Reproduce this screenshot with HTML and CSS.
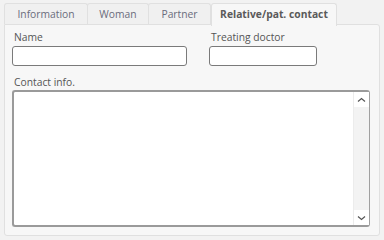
FILE: index.html
```html
<!DOCTYPE html>
<html>
<head>
<meta charset="utf-8">
<link rel="stylesheet" href="styles.css">
</head>
<body>
<div class="tabs">
  <div class="tab t1">Information</div>
  <div class="tab t2">Woman</div>
  <div class="tab t3">Partner</div>
  <div class="tab active">Relative/pat. contact</div>
</div>
<div class="panel">
  <div class="row">
    <div class="field f-name">
      <label class="lbl">Name</label>
      <div class="input"></div>
    </div>
    <div class="field f-doc">
      <label class="lbl">Treating doctor</label>
      <div class="input"></div>
    </div>
  </div>
  <div class="field f-contact">
    <label class="lbl">Contact info.</label>
    <div class="memo">
      <div class="memo-text"></div>
      <div class="scroll">
        <div class="sbtn"><svg width="9" height="6" viewBox="0 0 9 6"><path d="M1 4.5 L4.5 1.5 L8 4.5" fill="none" stroke="#555" stroke-width="1.2"/></svg></div>
        <div class="strack"></div>
        <div class="sbtn"><svg width="9" height="6" viewBox="0 0 9 6"><path d="M1 1.5 L4.5 4.5 L8 1.5" fill="none" stroke="#555" stroke-width="1.2"/></svg></div>
      </div>
    </div>
  </div>
</div>
</body>
</html>
```
FILE: styles.css
```css
* { box-sizing: border-box; }
body {
  margin: 0;
  width: 384px;
  height: 240px;
  background: #f2f2f2;
  font-family: "Open Sans", "Noto Sans", sans-serif;
  font-size: 10.3px;
  color: #555;
  overflow: hidden;
}
.tabs {
  display: flex;
  align-items: flex-end;
  padding-left: 4px;
  height: 25px;
  padding-top: 3px;
  position: relative;
  z-index: 1;
}
.tab {
  height: 21px;
  border: 1px solid #e0e0e0;
  border-bottom: none;
  border-radius: 3px 3px 0 0;
  background: #f0f0f0;
  color: #6a6c7c;
  display: flex;
  align-items: center;
  justify-content: center;
  margin-right: -1px;
  margin-bottom: 1px;
}
.t1 { width: 84px; }
.t2 { width: 62px; }
.t3 { width: 63px; }
.tab.active {
  width: 126px;
  height: 23px;
  margin-left: 1px;
  margin-bottom: -1px;
  background: #f7f7f7;
  font-weight: bold;
  color: #5a5a5a;
  padding-bottom: 2px;
}
.panel {
  margin: -1px 4px 0 4px;
  height: 212px;
  border: 1px solid #e0e0e0;
  border-radius: 0 3px 3px 3px;
  background: #f7f7f7;
  padding: 5px 9px 8px 7px;
  display: flex;
  flex-direction: column;
}
.row {
  display: flex;
  gap: 22px;
}
.field {
  display: flex;
  flex-direction: column;
}
.lbl {
  line-height: 14px;
  height: 16px;
  padding-left: 2px;
}
.input {
  height: 20px;
  background: #fff;
  border: 1px solid #7a7a7a;
  border-radius: 3px;
}
.f-name .input { width: 175px; }
.f-doc .input { width: 108px; }
.f-contact {
  margin-top: 9px;
  flex: 1;
}
.f-contact .lbl { height: 15px; }
.memo {
  flex: 1;
  display: flex;
  background: #fff;
  border: 1px solid #a0a0a0;
  border-top: 2px solid #9a9a9a;
  border-left: 2px solid #9a9a9a;
  border-bottom: 2px solid #9a9a9a;
  border-radius: 3px;
}
.memo-text { flex: 1; }
.scroll {
  width: 16px;
  display: flex;
  flex-direction: column;
  background: #f3f3f3;
  border-left: 1px solid #ececec;
}
.sbtn {
  height: 15px;
  background: #fff;
  display: flex;
  align-items: center;
  justify-content: center;
}
.strack { flex: 1; }
```
